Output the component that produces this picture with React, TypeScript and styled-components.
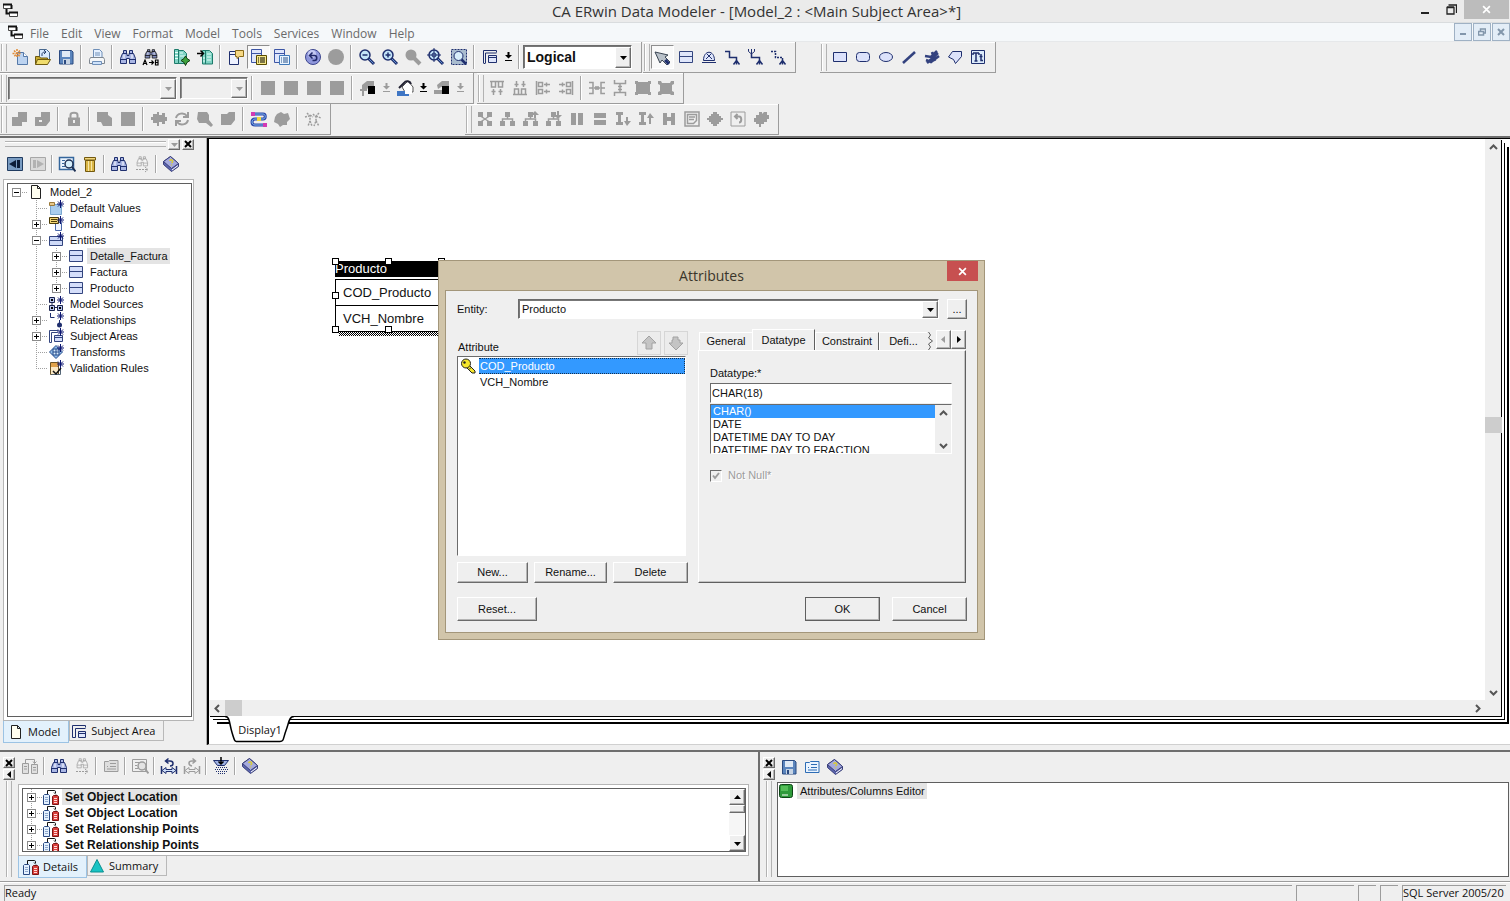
import React, { ReactNode } from 'react';
import styled, { createGlobalStyle, css } from 'styled-components';

const face = '#efefef';
const shade = '#9c9c9c';
const dark = '#5f5f5f';
const navy = '#1f2f6e';
const uiFont = '"Open Sans", "Noto Sans", sans-serif';
const smallFont = '"Liberation Sans", Arial, sans-serif';

const GlobalStyle = createGlobalStyle`
  * { box-sizing: border-box; }
  body { margin: 0; background: ${face}; overflow: hidden; }
  button, select, input { font: inherit; color: inherit; margin: 0; padding: 0; border-radius: 0; }
  ul { list-style: none; margin: 0; padding: 0; }
`;

/* ---------- icons ---------- */

const Binoculars = ({ fill, line }: { fill: string; line: string }) => (
  <g fill={fill} stroke={line}>
    <path d="M4.500 2.500h3v3h-3zM10.500 2.500h3v3h-3z" />
    <path d="M3.500 5.500h4.500v2h2v-2h4.500l2 5v5h-6v-5h-3v5h-6v-5z" />
    <path d="M1.500 11.500h6M10.500 11.500h6" fill="none" />
    <path d="M5 6.500v4M13 6.500v4" fill="none" stroke="#fff" />
  </g>
);

const Lens = ({ children }: { children?: ReactNode }) => (
  <g>
    <path d="M10.500 10.500l5.500 5.500" stroke={navy} strokeWidth="3" />
    <path d="M11 11l4.500 4.500" stroke="#5f8fd0" strokeWidth="1" />
    <circle cx="7" cy="7" r="5" fill="#c3e4f8" stroke={navy} strokeWidth="1.500" />
    {children}
  </g>
);

const Book = () => (
  <g stroke="#3a3f78">
    <path d="M1.500 6.500l7-5 8 7v3l-7 5-8-7z" fill="#5c66b0" />
    <path d="M1.500 6.500l7-5 8 7-7 5z" fill="#a5aade" />
    <path d="M10 15l6-4.500" stroke="#fff" />
    <path d="M7.500 6c1-2 4-1 3 1l-1 1M9.500 9.500v1" stroke="#d8cc3a" fill="none" strokeWidth="1.500" />
  </g>
);

const Disk = () => (
  <g>
    <path d="M2.500 2.500h12l1.500 1.500v12h-13.500z" fill="#5b85bd" stroke="#2b4a80" />
    <path d="M5 3h8v6h-8z" fill="#dfe9f5" />
    <path d="M6 11h7v5h-7z" fill="#c7d4e4" />
    <path d="M7 12h2v4h-2z" fill="#2b4a80" />
  </g>
);

const PasteCard = () => (
  <g>
    <path d="M2.500 4.500h4l1-1h8.500v11h-13.500z" fill="#eaf4ff" stroke="#2c6cb5" />
    <path d="M8 6.500h6M5 9.500h1M8 9.500h6M5 12h9" stroke="#2c6cb5" />
  </g>
);

const LinkDown = ({ dashed, fork }: { dashed?: boolean; fork?: boolean }) => (
  <g fill="none" stroke={navy} strokeWidth="1">
    <path d={fork ? 'M5.500 6v3.500h8v3' : 'M2 3.500h4.500v6h7v3'} strokeDasharray={dashed ? '2 1' : undefined} strokeWidth="1.500" />
    {fork && <path d="M2.500 1v2.500l3 2.500 3-2.500v-2.500M5.500 1v5" />}
    <path d="M10.500 16.500l3-4 3 4M13.500 12v4.500" strokeWidth="1.500" />
  </g>
);

const GreyTree = ({ children }: { children?: ReactNode }) => (
  <g fill={shade}>
    <path d="M6 2h5v5h-5zM1 11h5v5h-5zM11 11h5v5h-5z" />
    <path d="M8.500 7v2M3.500 12v-3h10v3" stroke={shade} fill="none" strokeWidth="1.500" />
    {children}
  </g>
);

const glyphs: Record<string, ReactNode> = {
  new: (
    <g>
      <path d="M6.500 4.500h6l4 4v8h-10z" fill="#bcd3f0" stroke="#5579a8" />
      <path d="M12.500 4.500v4h4" fill="#fff" stroke="#5579a8" />
      <path d="M6 1v9M1.500 5.500h9M3 2.500l6 6M9 2.500l-6 6" stroke="#e08a35" strokeDasharray="2 1" strokeWidth="1.500" />
    </g>
  ),
  open: (
    <g>
      <path d="M5.500 1.500h7l3 3v8h-10z" fill="#d9eaff" stroke="#48688f" />
      <path d="M8 8v-2c0-1 1-2 3-2M10 2l2 2-2 2" stroke="#26406e" fill="none" />
      <path d="M1.500 8.500h4l1 1.500h7v6h-12z" fill="#c8aa2e" stroke="#6e5a10" />
      <path d="M3.500 11.500h13l-3 5h-12z" fill="#f0dc6c" stroke="#6e5a10" />
    </g>
  ),
  save: <Disk />,
  print: (
    <g stroke="#6f8fb8">
      <path d="M5.500 9v-7.500h6l2.500 2.500v5" fill="#e6f1ff" />
      <path d="M2.500 9.500h13l1 2v4h-15v-4z" fill="#f4f6f8" stroke="#7f8790" />
      <path d="M4.500 13.500h9v3h-9z" fill="#cfe3fb" />
      <path d="M7 5h5M7 7h5" />
    </g>
  ),
  find: <Binoculars fill="#a9b6e4" line={navy} />,
  replace: (
    <g>
      <g transform="translate(2 0) scale(.78 .65)">
        <Binoculars fill="#7f8ab8" line="#000" />
      </g>
      <path d="M1 17l2-5 2 5M1.500 15.500h3M7 14.500h4M9.500 12.500l2 2-2 2" stroke="#000" fill="none" strokeWidth="1.200" />
      <path d="M13.500 12v5h2.500v-5zM13.500 14.500h2.500" stroke="#000" fill="none" strokeWidth="1.200" />
    </g>
  ),
  exportLib: (
    <g>
      <path d="M1.500 1.500h4v14h-4zM5.500 2.500h5l3 3v10h-8z" fill="#7fd3c4" stroke="#1d7b6b" />
      <path d="M2 4.500h3M2 7.500h3M2 10.500h3M7 5h3M7 8h5" stroke="#e8fffa" />
      <path d="M12.500 8l1.500 2.500 3 2-3 2-1.500 3-1.500-3-3-2 3-2z" fill="#3ea33e" stroke="#123d12" />
    </g>
  ),
  importLib: (
    <g>
      <path d="M6.500 2.500h7l3 3v10.500h-10z" fill="#7fd3c4" stroke="#1d7b6b" />
      <path d="M9.500 3v13" stroke="#1d7b6b" />
      <path d="M11 6h4M11 9h4M11 12h4M7 10h2M7 13h2" stroke="#e8fffa" />
      <path d="M1 5.500h6M4.500 2.500l3 3-3 3" stroke="#000" strokeWidth="1.500" fill="none" />
    </g>
  ),
  callout: (
    <g>
      <path d="M2.500 3.500h9v13h-9z" fill="#eef2ff" stroke={navy} />
      <path d="M2.500 6.500h9" stroke={navy} />
      <path d="M8.500 2.500h8v6h-4l-2.500 2v-2h-1.500z" fill="#f6d884" stroke="#8a6a18" />
    </g>
  ),
  listYellow: (
    <g>
      <path d="M1.500 1.500h10v13h-10z" fill="#dfe6fb" stroke="#3c55a5" />
      <path d="M1.500 5.500h10" stroke="#3c55a5" />
      <path d="M6.500 7.500h10v9h-10z" fill="#f6e88a" stroke="#5a4c00" />
      <path d="M8 10h1M10 10h5M8 12h1M10 12h5M8 14h1M10 14h5" stroke="#000" />
    </g>
  ),
  listBlue: (
    <g>
      <path d="M1.500 1.500h10v13h-10z" fill="#dfe6fb" stroke="#3c55a5" />
      <path d="M1.500 5.500h10" stroke="#3c55a5" />
      <path d="M6.500 7.500h10v9h-10z" fill="#eaf5ff" stroke="#3f78b8" />
      <path d="M8 10h1M10 10h5M8 12h1M10 12h5M8 14h1M10 14h5" stroke="#26508a" />
    </g>
  ),
  undo: (
    <g>
      <circle cx="9" cy="9" r="7.500" fill="#8f97dc" stroke="#3d468e" />
      <circle cx="8" cy="6" r="4" fill="#c4c9f3" />
      <path d="M6 7.500h4.500c3 0 3 5 0 5h-2M8.500 4.500l-3 3 3 3" stroke="#20286a" strokeWidth="1.500" fill="none" />
    </g>
  ),
  redo: <circle cx="9" cy="9" r="8" fill={shade} />,
  zoomOut: <Lens><path d="M4.500 7h5" stroke={navy} strokeWidth="1.500" /></Lens>,
  zoomIn: <Lens><path d="M4.500 7h5M7 4.500v5" stroke={navy} strokeWidth="1.500" /></Lens>,
  zoomOff: <g><circle cx="7" cy="7" r="5.500" fill={shade} /><path d="M10 10l6 6" stroke={shade} strokeWidth="4" /></g>,
  zoomTarget: <Lens><path d="M7 0v14M0 7h14" stroke={navy} /><circle cx="7" cy="7" r="2" fill="none" stroke={navy} /></Lens>,
  zoomArea: (
    <g>
      <path d="M1.500 1.500h15v15h-15z" fill="#a9bccf" stroke={navy} strokeDasharray="2 1" />
      <path d="M11 11l5 5" stroke={navy} strokeWidth="2.500" />
      <circle cx="8.500" cy="8" r="4.500" fill="#d8eefb" stroke={navy} />
    </g>
  ),
  windows: (
    <g fill="none" stroke={navy}>
      <path d="M2.500 15v-12.500h13M4.500 15v-10h11" />
      <path d="M2.500 15.500h2M15.500 2.500v2" />
      <path d="M7.500 7.500h8v7h-8z" fill="#dfe6fb" />
      <path d="M7.500 9.500h8" />
    </g>
  ),
  pointer: (
    <g>
      <path d="M1 4l13 3-3 2 5 5-3 3-5-5-2 3z" fill="#b9c1c9" stroke="#3b4653" />
      <path d="M12.500 11l3.500 4-2 2-4-4z" fill={navy} />
    </g>
  ),
  entity: (
    <g>
      <path d="M2.500 3.500h13v11h-13z" fill="#dfe6fb" stroke="#33457f" />
      <path d="M3 8.500h12" stroke="#33457f" />
    </g>
  ),
  subtype: (
    <g fill="none" stroke={navy}>
      <path d="M3.500 12.500c0-11 11-11 11 0zM2 14.500h14" fill="#dfe6fb" />
      <path d="M6 11l5-5M12 11l-5-5" />
    </g>
  ),
  linkSolid: <LinkDown />,
  linkFork: <LinkDown fork />,
  linkDash: <LinkDown dashed />,
  rect: <path d="M2.500 4.500h13v9h-13z" fill="#dce2fb" stroke={navy} />,
  roundRect: <rect x="2.500" y="4.500" width="13" height="9" rx="3" fill="#dce2fb" stroke={navy} />,
  ellipse: <ellipse cx="9" cy="9" rx="6.500" ry="4.500" fill="#dce2fb" stroke={navy} />,
  line: <path d="M3 15l12-11" stroke="#33427f" strokeWidth="2.500" />,
  polyline: <path d="M2 8l6 1 6-6M4 15l11-10M3 12l5 2 8-6M9 4l3 9" stroke="#33427f" strokeWidth="2.500" fill="none" />,
  polygon: <path d="M6.500 3.500h9v5l-6 7-2-4-5-2.500z" fill="#dce2fb" stroke={navy} />,
  textBox: (
    <g fill="none" stroke={navy}>
      <path d="M2.500 2.500h13v13h-13z" fill="#dcebfb" />
      <path d="M4 5h6M7 5v8M5.500 13h3M4 5v2M10 5v2M12 6v6.500h2M10.500 8.500h3" strokeWidth="1.500" />
    </g>
  ),
  square: <path d="M2 2h14v14h-14z" fill={shade} />,
  textColor: (
    <g fill={shade}>
      <path d="M3 6l5-4h7v6h-5l-2 2h-5z" />
      <path d="M9 7h7v8h-7z" fill="#000" />
      <path d="M1 10h7v2h-3v5h-2v-5h-2z" />
    </g>
  ),
  fillColor: (
    <g>
      <path d="M6 8l6-6 5 6v5h-8z" fill="#fff" stroke="#555" />
      <path d="M3 9l5-5c2-3 6-2 7 1" stroke="#223" strokeWidth="2" fill="none" />
      <path d="M1 12h9l3 1v4h-12z" fill="#3f76c4" />
      <path d="M9 9h7v6h-7z" fill="#fff" />
    </g>
  ),
  lineColor: (
    <g fill={shade}>
      <path d="M4 6l5-4h7v6h-8l-3 2z" />
      <path d="M9 7h7v8h-7z" fill="#000" />
      <path d="M1 11h8v4h-8z" />
    </g>
  ),
  alignTop: <path d="M2 2.500h14M3.500 3v5h4v-5M10.500 3v5h4v-5M5.500 16v-6M3.500 12.500h4M12.500 16v-6M10.500 12.500h4" stroke={shade} fill="none" strokeWidth="1.500" />,
  alignBottom: <path d="M2 15.500h14M3.500 15v-5h4v5M10.500 15v-5h4v5M5.500 2v6M3.500 5.500h4M12.500 2v6M10.500 5.500h4" stroke={shade} fill="none" strokeWidth="1.500" />,
  alignLeft: <path d="M2.500 2v14M4.500 3.500h4v4h-4zM4.500 10.500h4v4h-4zM10 5.500h6M10 12.500h6M12.500 3.500v4M12.500 10.500v4" stroke={shade} fill="none" strokeWidth="1.500" />,
  alignRight: <path d="M15.500 2v14M9.500 3.500h4v4h-4zM9.500 10.500h4v4h-4zM2 5.500h6M2 12.500h6M5.500 3.500v4M5.500 10.500v4" stroke={shade} fill="none" strokeWidth="1.500" />,
  spreadH: <path d="M1 3.500h4v11h-4M1 9h4M17 3.500h-4v11h4M13 9h4M6 9h6M8 7v4M10 7v4" stroke={shade} fill="none" strokeWidth="1.500" />,
  spreadV: <path d="M3.500 1v3.500h11v-3.500M3.500 17v-3.500h11v3.500M9 5v8M7 7.500h4M7 10.500h4" stroke={shade} fill="none" strokeWidth="1.500" />,
  group: <path d="M1 2h3v1h10v-1h3v3h-1v8h1v3h-3v-1h-10v1h-3v-3h1v-8h-1z" fill={shade} />,
  ungroup: <path d="M1 2h3l1 2h8l1-2h3v3l-2 1v6l2 1v3h-3l-1-1h-8l-1 1h-3v-3l2-1v-6l-2-1z" fill={shade} />,
  blockA: <path d="M7 2h9v10h-5v4h-10v-9h6z" fill={shade} />,
  blockB: <path d="M7 2h9v9l-4 5h-11v-9h6zM5 12h3v-2h-3z" fill={shade} fillRule="evenodd" />,
  lock: <g><path d="M3 7.500h12v8.500h-12z" fill={shade} /><path d="M5.500 8v-3c0-3 7-3 7 0v3" fill="none" stroke={shade} strokeWidth="2" /><path d="M8 10h2v3h-2z" fill={face} /></g>,
  copyShapes: <path d="M1 2h11v3l4 3v8h-9l-2-4h-4z" fill={shade} />,
  mergeH: <path d="M1 7h2v-3h4v-2h2v3h3v-2h3v4h2v4h-2v3h-3v-2h-3v4h-2v-3h-4v-3h-2z" fill={shade} />,
  refresh: <path d="M3 8c1-5 8-6 11-2M15 10c-1 5-8 6-11 2M15 2v5h-5M3 16v-5h5" stroke={shade} strokeWidth="2" fill="none" />,
  find2: <path d="M2 2h9l2 3v5l4 5-2 2-5-4h-7l-2-4z" fill={shade} />,
  tagShape: <path d="M2 4h6l2-2h6v8l-4 5h-10z" fill={shade} />,
  snake: (
    <g fill="none">
      <path d="M4 4h9c3 0 3 5 0 5h-8c-4 0-4 6 0 6h9" stroke="#2b45a8" strokeWidth="3" />
      <path d="M4 4h9c3 0 3 5 0 5h-8c-4 0-4 6 0 6h9" stroke="#7fb8ee" />
      <path d="M1 2h4v4h-4zM13 13h4v4h-4z" fill="#d23ab4" />
      <path d="M7 7h4v4h-4z" fill="#f0d93f" />
    </g>
  ),
  cloud: <path d="M4 4l4-2 3 2 4-1 2 6-3 3v3h-4l-3 2-2-3-4-2 1-5z" fill={shade} />,
  people: (
    <g fill="none" stroke={shade} strokeDasharray="2 1">
      <path d="M3 3l3 3v5l-2 5M6 11l2 5M9 4l3 3v4l-2 5M12 11l3 5M1 7l4-1M12 6l5 2M15 3l-3 3M6 5l3 2" strokeWidth="1.500" />
    </g>
  ),
  layoutX: <g><path d="M2 2h5v5h-5zM11 2h5v5h-5zM2 11h5v5h-5zM11 11h5v5h-5z" fill={shade} /><path d="M4.500 6l9 6M13.500 6l-9 6" stroke={shade} strokeWidth="1.500" /></g>,
  layoutTree: <GreyTree />,
  layoutUp: <GreyTree><path d="M12 8h2v-3h3l-4-4-4 4h3z" /></GreyTree>,
  layoutDown: <GreyTree><path d="M12 1h2v4h3l-4 4-4-4h3z" /></GreyTree>,
  columns: <path d="M3 3h5v12h-5zM10 3h5v12h-5z" fill={shade} />,
  rows: <path d="M3 3h12v5h-12zM3 10h12v5h-12z" fill={shade} />,
  growDown: <path d="M2 2h7v3h-2v7h2v3h-7v-3h2v-7h-2zM12 7h2v4h3l-4 5-3-5h2z" fill={shade} />,
  growUp: <path d="M2 2h7v3h-2v7h2v3h-7v-3h2v-7h-2zM12 14h2v-6h3l-4-5-3 5h2z" fill={shade} />,
  bridge: <path d="M3 3h4v4h4v-4h4v12h-4v-4h-4v4h-4z" fill={shade} />,
  note: <g fill="none" stroke={shade} strokeWidth="1.500"><path d="M2 2h14v14h-14zM4.500 4.500h9v6l-3 3h-6z" /><path d="M6 7h6M6 9.500h5" /></g>,
  diamond: <path d="M7 2h4v2h2v2h2v2h2v2h-2v2h-2v2h-2v2h-4v-2h-2v-2h-2v-2h-2v-2h2v-2h2v-2h2z" fill={shade} />,
  back: <g fill="none" stroke={shade}><path d="M2 2h14v14h-14z" /><path d="M7 6.500h3c3 0 3 6 0 6M8.500 4l-2.500 2.500 2.500 2.500" strokeWidth="2" /></g>,
  burst: <path d="M7 2h3v2l2-2h3v3h2v4h-2v3h-3v2h-3v3h-2v-3h-3v-2h-2v-4h2v-3h3z" fill={shade} />,
  prev: (
    <g>
      <path d="M1.500 2.500h15v13h-15z" fill="#7a9cc2" stroke="#203b60" />
      <path d="M10 5v8l-7-4zM11 5h3v8h-3z" fill="#0c1d38" />
    </g>
  ),
  next: (
    <g>
      <path d="M1.500 2.500h15v13h-15z" fill="#dadada" stroke="#a7a7a7" />
      <path d="M8 5v8l7-4zM4 5h3v8h-3z" fill="#b2b2b2" />
    </g>
  ),
  preview: (
    <g>
      <path d="M1.500 2.500h14v12h-14z" fill="#eaf4ff" stroke="#34669c" strokeWidth="1.500" />
      <path d="M4 5.500h3M4 8.500h2M4 11.500h3" stroke="#34669c" />
      <circle cx="11" cy="9" r="4" fill="#d7effb" stroke="#1d2f52" strokeWidth="1.500" />
      <path d="M14 12l3.500 4.500" stroke="#1d2f52" strokeWidth="2" />
    </g>
  ),
  trash: (
    <g>
      <path d="M4.500 5.500h9v11h-9z" fill="#d9b546" stroke="#73590e" />
      <path d="M3.500 2.500h11v2.500h-11z" fill="#f1d67c" stroke="#73590e" />
      <path d="M7.500 6v10M10.500 6v10" stroke="#f7e6a5" />
    </g>
  ),
  findNext: (
    <g>
      <g transform="translate(3 0) scale(.7)"><Binoculars fill="none" line={shade} /></g>
      <path d="M3 14.500h12M12 12l3 2.500-3 2.500" stroke={shade} strokeDasharray="2 1" fill="none" />
    </g>
  ),
  book: <Book />,
  logsOff: (
    <g fill="none" stroke={shade}>
      <path d="M1.500 6.500h6v10h-6zM10.500 7.500h6v9h-6z" fill="#e0e0e0" />
      <path d="M4.500 6v-3.500h9v4M12 4.500l1.500 2 2-2M3 9.500h3M3 12h3M12 10.500h3M12 13h3" />
    </g>
  ),
  cardOff: <g fill="none" stroke={shade}><path d="M2.500 4.500h4l1-1h8.500v11h-13.500z" fill="#dedede" /><path d="M8 6.500h6M5 9.500h1M8 9.500h6M5 12h9" /></g>,
  previewOff: <g fill="none" stroke={shade}><path d="M1.500 2.500h14v12h-14zM4 5.500h8M4 8.500h2M4 11.500h3" /><circle cx="11" cy="9" r="4" fill="#e3e3e3" strokeWidth="1.500" /><path d="M14 12l3.500 4.500" strokeWidth="2" /></g>,
  undoSpan: <g fill="none" stroke={navy}><path d="M1.500 9v8M16.500 9v8" strokeWidth="1.500" /><path d="M6 10.500l-4 3 4 3v-2h6v2l4-3-4-3v2h-6z" fill="#cfe0fa" /><path d="M6 4h4c4 0 4 5 0 5M8.500 1.500l-3 2.500 3 2.500" strokeWidth="1.500" /></g>,
  redoSpan: <g fill="none" stroke={shade}><path d="M1.500 9v8M16.500 9v8" strokeWidth="1.500" /><path d="M6 10.500l-4 3 4 3v-2h6v2l4-3-4-3v2h-6z" /><path d="M12 4h-3c-4 0-4 4 0 5M9.500 1.500l3 2.500-3 2.500" strokeWidth="1.500" /></g>,
  drop: (
    <g>
      <path d="M1.500 3.500h15l-4 5h-7z" fill="#9fb2e4" stroke={navy} />
      <path d="M9 0v7M6.500 4.500l2.500 2.500 2.500-2.500" stroke="#000" fill="none" strokeWidth="1.500" />
      <path d="M4 10.500h11M3 12.500h13M4 14.500h11M6 16.500h7" stroke={navy} strokeDasharray="1 1" />
    </g>
  ),
  card: <PasteCard />,
};

const Star = () => <path d="M12.500 0v8M9 4h7M10 1.500l5 5M15 1.500l-5 5" stroke="#0a1470" />;

const treeGlyphs: Record<string, ReactNode> = {
  page: <path d="M3.500 1.500h6l3 3v10h-9zM9.500 1.500v3h3" fill="#fffef0" stroke="#222" />,
  defaults: <g><path d="M2.500 4.500h11v10h-11z" fill="#a9cdee" stroke="#7aa7d0" /><path d="M1.500 2.500h5v3h-5z" fill="#e7c98c" stroke="#9b7a3a" /><Star /></g>,
  domains: <g><path d="M7.500 6.500h6v8h-6z" fill="#eef3ff" stroke="#4b68a8" /><path d="M1.500 1.500h9v6h-9z" fill="#f3d676" stroke="#4d3c08" /><path d="M3 3.500h6M3 5.500h6" stroke="#4d3c08" /><Star /></g>,
  entities: <g><path d="M1.500 4.500h13v9h-13z" fill="#cfdaf7" stroke="#33457f" /><path d="M2 8.500h12" stroke="#33457f" /><Star /></g>,
  entity: <g><path d="M1.500 2.500h13v11h-13z" fill="#d5defa" stroke="#33457f" /><path d="M2 7.500h12" stroke="#33457f" /></g>,
  sources: <g><path d="M1.500 1.500h5v5h-5zM1.500 9.500h5v5h-5zM9.500 9.500h5v5h-5z" fill="#b9c6ec" stroke="#1b2450" /><path d="M7 11.500h2M4 6v4" stroke="#1b2450" /><path d="M3 3h2v2h-2zM3 11h2v2h-2zM11 11h2v2h-2z" fill="#000" /><Star /></g>,
  relations: <g><path d="M2.500 1v4.500h4M11.500 8v4" stroke={navy} fill="none" /><circle cx="11.500" cy="13" r="2.500" fill={navy} /><Star /></g>,
  areas: <g><path d="M1.500 14.500v-12h9M1.500 14.500h2v-10h6" fill="none" stroke="#33457f" /><path d="M6.500 7.500h8v6h-8z" fill="#d5defa" stroke="#33457f" /><path d="M7 9.500h7" stroke="#33457f" /><Star /></g>,
  transforms: <g><path d="M8 1.500l6.500 6.500-6.500 6.500-6.500-6.500z" fill="#8fbbe8" stroke="#234a8a" /><path d="M5 5h6v6h-6zM5 8h6M8 5v6" stroke="#234a8a" fill="#d9ecfb" /><Star /></g>,
  rules: <g><path d="M2.500 2.500h8v12h-8z" fill="#fbe9c5" stroke="#6b5426" /><path d="M3 3h7v4h-7z" fill="#e0a24a" /><path d="M12.500 8v6.500h-9" stroke="#567" fill="none" /><path d="M5 11l3 3 5-6" stroke="#111" strokeWidth="1.500" fill="none" /><Star /></g>,
  log: (
    <g>
      <path d="M4.500 5v-3.500h7c1 0 1 1 1 2.500M11 3.500l2 2" stroke="#111" fill="none" />
      <path d="M.5 6.500l1-1h4l1 1v9h-6z" fill="#e4f1ff" stroke="#2a4a84" />
      <path d="M9.500 7.500l1-1h4l1 1v8h-6z" fill="#d9403c" stroke="#7c1313" />
      <path d="M2 8.500h3M2 10.500h3M2 12.500h3" stroke="#8fa8cc" />
      <path d="M11 9.500h3M11 11.500h3M11 13.500h3" stroke="#ffd9d9" />
    </g>
  ),
  summary: <path d="M8 1.500l6.500 12.500h-13z" fill="#19c3c3" stroke="#0b8f8f" />,
  windows: <g fill="none" stroke={navy}><path d="M1.500 14.500v-12h13v2M1.500 14.500h3v-9h10" /><path d="M7.500 8.500h7v6h-7z" fill="#dfe6fb" /><path d="M7.500 10.500h7" /></g>,
  advisor: <g><rect x="1.500" y="1.500" width="13" height="13" rx="2" fill="#2e9a3a" stroke="#0d4416" /><path d="M3 3h7v5h-7z" fill="#54bd58" /><path d="M4 12h6" stroke="#fff" /></g>,
};

const Glyph = ({ name }: { name: string }) => (
  <svg width="18" height="18" viewBox="0 0 18 18" aria-hidden="true">{glyphs[name]}</svg>
);
const TreeGlyph = ({ name }: { name: string }) => (
  <svg width="16" height="16" viewBox="0 0 16 16" aria-hidden="true">{treeGlyphs[name]}</svg>
);
const AppMark = () => (
  <svg width="16" height="16" viewBox="0 0 16 16" aria-hidden="true">
    <path d="M.5 2.500h8v4h-8zM6.500 10.500h8v4h-8z" fill="#fff" stroke="#444" />
    <path d="M0 2.500h9M6 10.500h9M3.500 7v4.500h3M8.500 3v4" stroke="#111" strokeWidth="2" fill="none" />
  </svg>
);
const Caret = ({ dir, color = '#000' }: { dir: 'up' | 'down' | 'left' | 'right'; color?: string }) => {
  const d = { up: 'M1 6h7l-3.500-4z', down: 'M1 3h7l-3.500 4z', left: 'M6 1v7l-4-3.500z', right: 'M3 1v7l4-3.500z' }[dir];
  return <svg width="9" height="9" viewBox="0 0 9 9" aria-hidden="true"><path d={d} fill={color} /></svg>;
};
const Chevron = ({ dir }: { dir: 'up' | 'down' | 'left' | 'right' }) => {
  const d = { up: 'M1 6l3.500-3.500 3.500 3.500', down: 'M1 3l3.500 3.500 3.500-3.500', left: 'M6 1l-3.500 3.500 3.500 3.500', right: 'M3 1l3.500 3.500-3.500 3.500' }[dir];
  return <svg width="9" height="9" viewBox="0 0 9 9" aria-hidden="true"><path d={d} fill="none" stroke="#555" strokeWidth="2" /></svg>;
};
const Cross = ({ size = 8, color = '#000', weight = 2 }: { size?: number; color?: string; weight?: number }) => (
  <svg width={size} height={size} viewBox="0 0 8 8" aria-hidden="true"><path d="M1 1l6 6M7 1l-6 6" stroke={color} strokeWidth={weight} /></svg>
);

/* ---------- shared pieces ---------- */

const raised = css`
  border: 1px solid;
  border-color: #fff #6b6b6b #6b6b6b #fff;
  box-shadow: inset -1px -1px 0 #b4b4b4;
`;
const sunken = css`
  border: 1px solid;
  border-color: #6b6b6b #fff #fff #6b6b6b;
`;

const Shell = styled.div`
  display: flex;
  flex-direction: column;
  height: 100vh;
  background: ${face};
  font-family: ${smallFont};
  font-size: 11px;
  line-height: 13px;
  color: #111;
  cursor: default;
`;

const TitleBar = styled.header`
  display: grid;
  grid-template-columns: 1fr auto 1fr;
  flex: none;
  height: 23px;
  padding-left: 3px;
  background: #ebebeb;
  border-bottom: 1px solid #d9dcde;
`;
const TitleMark = styled.span`padding-top: 2px;`;
const AppTitle = styled.h1`
  margin: 0;
  font: 400 15px/23px ${uiFont};
  color: #333;
`;
const WindowButtons = styled.div`
  display: flex;
  justify-content: flex-end;
`;
const CaptionButton = styled.button<{ $close?: boolean }>`
  display: flex;
  align-items: center;
  justify-content: center;
  width: ${p => (p.$close ? 45 : 26)}px;
  height: 19px;
  margin-right: ${p => (p.$close ? 1 : 0)}px;
  border: 0;
  background: ${p => (p.$close ? '#bcbcbc' : 'none')};
`;

const MenuBar = styled.nav`
  display: flex;
  flex: none;
  align-items: center;
  height: 19px;
  padding-left: 8px;
  background: #f5f8fa;
  border-bottom: 1px solid #e6e8ea;
  font: 12px/18px ${uiFont};
  color: #6a6a6a;
`;
const MenuItem = styled.button`
  height: 19px;
  border: 0;
  background: none;
  padding: 2px 6px 0;
`;
const MdiButtons = styled.div`
  display: flex;
  gap: 1px;
  margin-left: auto;
`;
const MdiButton = styled.button`
  display: flex;
  align-items: center;
  justify-content: center;
  width: 18px;
  height: 18px;
  border: 1px solid #9fb1c4;
  background: #e3edf7;
`;

const Toolbars = styled.div`
  flex: none;
  padding-bottom: 1px;
  border-bottom: 2px solid #6e6e6e;
`;
const ToolbarRow = styled.div`display: flex;`;
const Band = styled.div<{ $gap?: number }>`
  display: flex;
  align-items: center;
  height: 31px;
  margin-left: ${p => p.$gap ?? 0}px;
  padding-right: 6px;
  border-right: 1px solid ${shade};
  border-bottom: 1px solid ${shade};
  box-shadow: inset 0 1px 0 #fff;
`;
const Grip = styled.span<{ $down?: boolean }>`
  flex: none;
  width: 6px;
  height: ${p => (p.$down ? 'auto' : '27px')};
  flex-grow: ${p => (p.$down ? 1 : 0)};
  margin: 0 1px;
  border: solid #b2b2b2;
  border-width: 0 1px;
  box-shadow: inset 1px 0 0 #fff, inset -1px 0 0 ${face};
`;
const Separator = styled.span<{ $tight?: boolean }>`
  flex: none;
  width: 1px;
  height: ${p => (p.$tight ? 18 : 24)}px;
  margin: 0 ${p => (p.$tight ? '3px 0 2px' : '4px 0 3px')};
  background: #a6a6a6;
  box-shadow: 1px 0 0 #fff;
`;
const ToolButton = styled.button<{ $pressed?: boolean }>`
  display: flex;
  flex: none;
  align-items: center;
  justify-content: center;
  width: 23px;
  height: 24px;
  background: ${p => (p.$pressed ? '#f9f9f9' : 'none')};
  border: 1px solid transparent;
  border-color: ${p => (p.$pressed ? '#8e8e8e #fff #fff #8e8e8e' : 'transparent')};
`;
const DropButton = styled.button`
  display: flex;
  flex: none;
  align-items: center;
  justify-content: center;
  width: 14px;
  height: 24px;
  border: 0;
  background: none;
`;

const DropMark = ({ color }: { color: string }) => (
  <svg width="9" height="10" viewBox="0 0 9 10" aria-hidden="true">
    <path d="M3.500 0h2v3h2.500l-3.500 3.500-3.500-3.500h2.500zM1 8h7v1h-7z" fill={color} />
  </svg>
);

/* '|' makes a separator, '>' and '<' an active or a greyed drop arrow, a leading '*' a pressed button */
const Tools = ({ items, tight }: { items: string; tight?: boolean }) => (
  <>
    {items.split(' ').map((it, i) => {
      if (it === '|') return <Separator key={i} $tight={tight} />;
      if (it === '>' || it === '<') {
        return <DropButton key={i} aria-label="More"><DropMark color={it === '>' ? '#000' : shade} /></DropButton>;
      }
      const name = it.replace('*', '');
      return (
        <ToolButton key={i} aria-label={name} $pressed={it.startsWith('*')}>
          <Glyph name={name} />
        </ToolButton>
      );
    })}
  </>
);

const ComboBox = styled.div<{ $w?: number; $h: number; $off?: boolean }>`
  display: flex;
  position: relative;
  flex: ${p => (p.$w ? 'none' : '1')};
  width: ${p => (p.$w ? `${p.$w}px` : 'auto')};
  height: ${p => p.$h}px;
  background: ${p => (p.$off ? face : '#fff')};
  ${sunken}
  box-shadow: inset 1px 1px 0 ${p => (p.$off ? '#8c8c8c' : '#777')};
`;
const ComboSelect = styled.select<{ $big?: boolean }>`
  flex: 1;
  width: 100%;
  padding-left: 3px;
  border: 0;
  background: none;
  appearance: none;
  outline: 0;
  font-weight: ${p => (p.$big ? 700 : 400)};
  font-size: ${p => (p.$big ? 14 : 11)}px;
  line-height: ${p => (p.$big ? 18 : 13)}px;
`;
const ComboArrow = styled.span`
  display: flex;
  position: absolute;
  top: 1px;
  right: 0;
  bottom: 0;
  width: 16px;
  align-items: center;
  justify-content: center;
  background: ${face};
  pointer-events: none;
  ${raised}
`;
const Combo = ({ label, value, w, h, off, big, id }: { label: string; value?: string; w?: number; h: number; off?: boolean; big?: boolean; id?: string }) => (
  <ComboBox $w={w} $h={h} $off={off}>
    <ComboSelect id={id} aria-label={label} disabled={off} $big={big}>
      <option>{value}</option>
    </ComboSelect>
    <ComboArrow><Caret dir="down" color={off ? shade : '#000'} /></ComboArrow>
  </ComboBox>
);
const ComboGap = styled.span`flex: none; width: 3px;`;

/* ---------- tree ---------- */

const TreeRow = styled.li<{ $bold?: boolean }>`
  display: flex;
  align-items: center;
  height: 16px;
  font-weight: ${p => (p.$bold ? 700 : 400)};
  font-size: ${p => (p.$bold ? 12 : 11)}px;
  white-space: nowrap;
`;
const dots = (to: string) => `repeating-linear-gradient(${to}, #a0a0a0 0 1px, transparent 1px 2px)`;
const Cell = styled.span<{ $line?: 'full' | 'half'; $stub?: boolean }>`
  display: flex;
  flex: none;
  align-items: center;
  width: 20px;
  height: 16px;
  padding-left: 4px;
  background-image: ${p => (p.$line ? dots('to bottom') : 'none')}, ${p => (p.$stub ? dots('to right') : 'none')};
  background-position: 8px 0, 8px 8px;
  background-size: 1px ${p => (p.$line === 'half' ? '8px' : '16px')}, 12px 1px;
  background-repeat: no-repeat;
`;
const Expander = styled.button`
  display: flex;
  width: 9px;
  height: 9px;
  border: 1px solid #8b8b8b;
  background: #fff;
`;
const ExpanderMark = ({ open }: { open?: boolean }) => (
  <Expander aria-label={open ? 'Collapse' : 'Expand'}>
    <svg width="7" height="7" viewBox="0 0 7 7"><path d={open ? 'M1 3.500h5' : 'M1 3.500h5M3.500 1v5'} stroke="#000" /></svg>
  </Expander>
);
const TreeLabel = styled.span<{ $sel?: boolean }>`
  margin-left: 3px;
  padding: 0 2px 0 3px;
  line-height: 16px;
  background: ${p => (p.$sel ? '#e4e4e4' : 'none')};
`;

type Node = { depth: number; icon: string; text: string; box?: 'plus' | 'minus'; last?: boolean; sel?: boolean };
const modelNodes: Node[] = [
  { depth: 0, icon: 'page', text: 'Model_2', box: 'minus' },
  { depth: 1, icon: 'defaults', text: 'Default Values' },
  { depth: 1, icon: 'domains', text: 'Domains', box: 'plus' },
  { depth: 1, icon: 'entities', text: 'Entities', box: 'minus' },
  { depth: 2, icon: 'entity', text: 'Detalle_Factura', box: 'plus', sel: true },
  { depth: 2, icon: 'entity', text: 'Factura', box: 'plus' },
  { depth: 2, icon: 'entity', text: 'Producto', box: 'plus', last: true },
  { depth: 1, icon: 'sources', text: 'Model Sources' },
  { depth: 1, icon: 'relations', text: 'Relationships', box: 'plus' },
  { depth: 1, icon: 'areas', text: 'Subject Areas', box: 'plus' },
  { depth: 1, icon: 'transforms', text: 'Transforms' },
  { depth: 1, icon: 'rules', text: 'Validation Rules', last: true },
];
const actions = ['Set Object Location', 'Set Object Location', 'Set Relationship Points', 'Set Relationship Points'];

/* ---------- docks ---------- */

const Workspace = styled.main`
  display: flex;
  flex: 1;
  min-height: 0;
`;
const LeftDock = styled.aside`
  display: flex;
  flex-direction: column;
  flex: none;
  width: 207px;
  padding: 0 12px 2px 3px;
  border-right: 1px solid #b0b0b0;
`;
const DockCaption = styled.div`
  display: flex;
  align-items: center;
  gap: 2px;
  height: 12px;
`;
const DockGrip = styled.span`
  flex: 1;
  height: 6px;
  margin-left: 2px;
  border: solid #b2b2b2;
  border-width: 1px 0;
  box-shadow: inset 0 1px 0 #fff;
`;
const TinyButton = styled.button`
  display: flex;
  align-items: center;
  justify-content: center;
  width: 12px;
  height: 11px;
  background: ${face};
  ${raised}
`;
const DockTools = styled.div<{ $h: number; $under: number }>`
  display: flex;
  flex: none;
  align-items: center;
  height: ${p => p.$h}px;
  padding-bottom: ${p => p.$under}px;
`;
const TreeFrame = styled.div`
  display: flex;
  flex: 1;
  min-height: 0;
  padding: 3px 1px 3px 3px;
  background: #fff;
  border: 1px solid #b5b5b5;
`;
const TreeBox = styled.ul`
  flex: 1;
  border: 1px solid ${dark};
  overflow: hidden;
`;
const DockTabs = styled.div`
  display: flex;
  flex: none;
  height: 22px;
  font: 11px/20px ${uiFont};
`;
const DockTab = styled.button<{ $on?: boolean }>`
  display: flex;
  align-items: center;
  gap: 4px;
  height: ${p => (p.$on ? 22 : 20)}px;
  padding: 0 8px 0 ${p => (p.$on ? 4 : 1)}px;
  border: 1px solid;
  border-top: 0;
  border-color: ${p => (p.$on ? '#9cc3e4' : '#b9b9b9')};
  background: ${p => (p.$on ? '#e3f1fc' : face)};
`;

/* ---------- canvas ---------- */

const CanvasArea = styled.section`
  display: flex;
  flex: 1;
  flex-direction: column;
  min-width: 0;
  background: #fff;
  border-left: 2px solid #000;
  border-top: 1px solid #000;
  border-bottom: 1px solid #d0d0d0;
`;
const Sheet = styled.div`
  display: grid;
  flex: 1;
  min-height: 0;
  margin-right: 9px;
  grid-template-columns: 1fr 16px;
  grid-template-rows: 1fr 16px;
  background: #fff;
  box-shadow: 1px 1px 0 #000, 3px 3px 0 #fff, 4px 4px 0 #000, 6px 6px 0 #fff, 8px 8px 0 #000;
`;
const Canvas = styled.div`
  position: relative;
  overflow: hidden;
`;
const ScrollBar = styled.div<{ $across?: boolean }>`
  display: flex;
  flex-direction: ${p => (p.$across ? 'row' : 'column')};
  align-items: stretch;
  background: ${face};
`;
const ScrollArrow = styled.button`
  display: flex;
  flex: none;
  align-items: center;
  justify-content: center;
  min-width: 16px;
  height: 16px;
  border: 0;
  background: none;
`;
const ScrollSpace = styled.span<{ $grow: number }>`flex: ${p => p.$grow} 1 0;`;
const ScrollThumb = styled.span`
  flex: none;
  min-width: 17px;
  min-height: 16px;
  background: #cdcdcd;
`;
const SheetCorner = styled.span`background: ${face};`;

const SheetTabs = styled.div`
  display: flex;
  flex: none;
  height: 28px;
  padding-left: 16px;
`;
const SheetTab = styled.button`
  display: grid;
  position: relative;
  width: 70px;
  height: 27px;
  border: 0;
  background: none;
  font: 11px/27px ${uiFont};
  & > * { grid-area: 1 / 1; }
`;

const EntityNode = styled.div`
  position: absolute;
  left: 126px;
  top: 122px;
  width: 108px;
  font-size: 13px;
  line-height: 16px;
`;
const EntityName = styled.div`
  height: 16px;
  background: #000;
  color: #fff;
`;
const EntityBox = styled.div`
  margin-top: 2px;
  border: 1px solid #000;
`;
const EntityColumn = styled.div`
  height: 25px;
  padding-left: 7px;
  line-height: 26px;
  & + & { height: 26px; border-top: 1px solid #000; line-height: 25px; }
`;
const EntityShadow = styled.div`
  height: 4px;
  margin-left: 4px;
  background: repeating-conic-gradient(#000 0 25%, #fff 0 50%) 0 0 / 2px 2px;
`;
const Handle = styled.i<{ $col: number; $row: number }>`
  position: absolute;
  left: ${p => p.$col * 53 - 3}px;
  top: ${p => p.$row * 34 - 3}px;
  width: 7px;
  height: 7px;
  border: 1px solid #000;
  background: #fff;
`;

/* ---------- dialog ---------- */

const Dialog = styled.div`
  position: absolute;
  left: 438px;
  top: 260px;
  display: flex;
  flex-direction: column;
  width: 547px;
  height: 380px;
  padding: 0 6px 6px;
  border: 1px solid #a3967a;
  background: #d1c5aa;
`;
const DialogTitle = styled.div`
  display: grid;
  grid-template-columns: 1fr auto 1fr;
  height: 29px;
`;
const DialogName = styled.h2`
  grid-column: 2;
  margin: 0;
  font: 400 14px/29px ${uiFont};
  color: #3a352b;
`;
const DialogClose = styled.button`
  display: flex;
  align-items: center;
  justify-content: center;
  justify-self: end;
  width: 31px;
  height: 20px;
  border: 0;
  background: #c75050;
`;
const DialogBody = styled.div`
  display: flex;
  flex: 1;
  flex-direction: column;
  padding: 8px 10px 10px 11px;
  border: 1px solid #a3967a;
  background: ${face};
`;
const EntityRow = styled.div`
  display: flex;
  gap: 8px;
  height: 20px;
`;
const EntityLabel = styled.label`
  width: 53px;
  line-height: 20px;
`;
const PushButton = styled.button<{ $w: number; $main?: boolean }>`
  width: ${p => p.$w}px;
  background: ${face};
  text-align: center;
  ${raised}
  outline: ${p => (p.$main ? `1px solid ${dark}` : '0')};
  outline-offset: -1px;
`;
const Columns = styled.div`
  display: flex;
  gap: 10px;
  height: 253px;
  margin-top: 11px;
`;
const AttributeColumn = styled.div`
  display: flex;
  flex-direction: column;
  width: 231px;
`;
const AttributeHead = styled.div`
  display: flex;
  align-items: flex-start;
  gap: 3px;
  height: 26px;
  padding-top: 1px;
`;
const AttributeLabel = styled.span`
  margin-right: auto;
  padding: 10px 0 0 1px;
`;
const MoveButton = styled.button`
  display: flex;
  align-items: center;
  justify-content: center;
  width: 24px;
  height: 24px;
  border: 1px solid #d6d6d6;
  background: #ececec;
`;
const AttributeList = styled.ul`
  flex: 1;
  && { padding: 1px 0 0 1px; margin-right: 2px; }
  background: #fff;
  ${sunken}
`;
const AttributeItem = styled.li`
  display: flex;
  height: 16px;
  align-items: center;
`;
const KeySlot = styled.span`width: 20px; height: 16px; padding-left: 1px;`;
const AttributeText = styled.span<{ $sel?: boolean }>`
  flex: 1;
  padding-left: 1px;
  line-height: 14px;
  border: 1px dotted ${p => (p.$sel ? '#14304e' : 'transparent')};
  border-left: 0;
  background: ${p => (p.$sel ? '#3399ff' : 'none')};
  color: ${p => (p.$sel ? '#fff' : '#111')};
`;
const ButtonRow = styled.div<{ $h: number; $top: number; $gap: number }>`
  display: flex;
  gap: ${p => p.$gap}px;
  height: ${p => p.$h}px;
  margin-top: ${p => p.$top}px;
`;
const Push = styled.span`flex: 1;`;

const TabColumn = styled.div`
  display: flex;
  flex: 1;
  flex-direction: column;
  min-width: 0;
  margin-right: 1px;
`;
const TabStrip = styled.div`
  display: flex;
  align-items: flex-end;
  height: 20px;
  padding-left: 1px;
`;
const Tab = styled.button<{ $w: number; $on?: boolean; $edge?: boolean }>`
  width: ${p => p.$w}px;
  height: ${p => (p.$on ? 22 : 18)}px;
  margin-bottom: ${p => (p.$on ? -1 : 0)}px;
  border: 1px solid #fff;
  border-bottom: 0;
  border-right: ${p => (p.$edge ? `1px solid ${dark}` : '0')};
  background: ${face};
  text-align: center;
`;
const TabTorn = styled.span`
  width: 8px;
  height: 18px;
`;
const TabScroll = styled.div`
  display: flex;
  align-self: flex-start;
  margin-left: auto;
`;
const TabScrollButton = styled.button`
  display: flex;
  align-items: center;
  justify-content: center;
  width: 15px;
  height: 19px;
  background: ${face};
  ${raised}
`;
const TabPanel = styled.div`
  flex: 1;
  padding: 16px 13px 0 11px;
  border: 1px solid;
  border-color: #fff ${dark} ${dark} #fff;
  box-shadow: inset -1px -1px 0 #c4c4c4;
`;
const FieldLabel = styled.label`
  display: block;
  height: 16px;
`;
const TextField = styled.input`
  display: block;
  width: 100%;
  height: 20px;
  padding-left: 1px;
  padding-bottom: 1px;
  background: #fff;
  outline: 0;
  ${sunken}
`;
const TypeList = styled.div`
  display: flex;
  height: 50px;
  margin-top: 1px;
  background: #fff;
  overflow: hidden;
  ${sunken}
`;
const TypeItems = styled.ul`flex: 1;`;
const TypeItem = styled.li<{ $sel?: boolean }>`
  height: 13px;
  padding-left: 2px;
  background: ${p => (p.$sel ? '#3399ff' : 'none')};
  color: ${p => (p.$sel ? '#fff' : '#111')};
`;
const CheckLabel = styled.label`
  display: flex;
  align-items: center;
  gap: 6px;
  margin-top: 15px;
  color: ${shade};
  text-shadow: 1px 1px 0 #fff;
`;
const CheckBox = styled.input`
  width: 12px;
  height: 12px;
  appearance: none;
  ${sunken}
`;
const CheckWrap = styled.span`
  display: grid;
  & > * { grid-area: 1 / 1; }
`;

/* ---------- bottom ---------- */

const BottomDock = styled.div`
  display: flex;
  flex: none;
  height: 137px;
  padding-top: 5px;
`;
const Pane = styled.section<{ $fill?: boolean }>`
  display: flex;
  flex: ${p => (p.$fill ? '1 1 0' : '0 0 760px')};
  min-width: 0;
  padding: ${p => (p.$fill ? '5px 1px 4px 3px' : '5px 9px 4px 3px')};
  border-top: 2px solid #6e6e6e;
  border-right: ${p => (p.$fill ? '0' : '2px solid #6e6e6e')};
  border-bottom: 1px solid ${shade};
`;
const PaneSide = styled.div`
  display: flex;
  flex-direction: column;
  align-items: center;
  gap: 1px;
  width: 12px;
`;
const PaneMain = styled.div<{ $inset: number }>`
  display: flex;
  flex: 1;
  flex-direction: column;
  min-width: 0;
  margin-left: ${p => p.$inset}px;
`;
const ActionFrame = styled.div`
  display: flex;
  height: 72px;
  padding: 3px 2px 3px 3px;
  background: #fff;
  border: 1px solid #b5b5b5;
`;
const ActionBox = styled.div`
  display: flex;
  flex: 1;
  min-width: 0;
  border: 1px solid ${dark};
  overflow: hidden;
`;
const ActionList = styled.ul`flex: 1;`;
const ClassicBar = styled.div`
  display: flex;
  flex-direction: column;
  width: 16px;
  background: #f6f6f6;
`;
const ClassicButton = styled.button<{ $h: number }>`
  display: flex;
  align-items: center;
  justify-content: center;
  height: ${p => p.$h}px;
  background: ${face};
  ${raised}
`;
const AdviceBox = styled.ul`
  flex: 1;
  border: 1px solid ${dark};
  background: #fff;
`;
const AdviceItem = styled.li`
  display: flex;
  align-items: center;
  height: 16px;
`;

const StatusBar = styled.footer`
  display: flex;
  flex: none;
  gap: 4px;
  height: 19px;
  padding: 2px 4px 0 4px;
  border-top: 1px solid #fff;
  font: 11px/14px ${uiFont};
`;
const StatusCell = styled.span<{ $w?: number }>`
  flex: ${p => (p.$w ? 'none' : '1')};
  width: ${p => (p.$w ? `${p.$w}px` : 'auto')};
  border-top: 1px solid ${shade};
  border-left: 1px solid ${shade};
  white-space: nowrap;
`;

const handles = [[0, 0], [1, 0], [2, 0], [0, 1], [2, 1], [0, 2], [1, 2], [2, 2]];
const menus = ['File', 'Edit', 'View', 'Format', 'Model', 'Tools', 'Services', 'Window', 'Help'];

const AttributesDialog = () => (
  <Dialog role="dialog" aria-label="Attributes">
    <DialogTitle>
      <DialogName>Attributes</DialogName>
      <DialogClose aria-label="Close"><Cross size={9} color="#fff" weight={1.5} /></DialogClose>
    </DialogTitle>
    <DialogBody>
      <EntityRow>
        <EntityLabel htmlFor="entity">Entity:</EntityLabel>
        <Combo id="entity" label="Entity" value="Producto" h={20} />
        <PushButton $w={20}>...</PushButton>
      </EntityRow>
      <Columns>
        <AttributeColumn>
          <AttributeHead>
            <AttributeLabel>Attribute</AttributeLabel>
            {['M8 1l7 7h-4v6h-6v-6h-4z', 'M8 15l7-7h-3v-3h-2v-3h-5v3h-1v3h-3z'].map((d, i) => (
              <MoveButton key={d} aria-label={i ? 'Move down' : 'Move up'}>
                <svg width="16" height="16" viewBox="0 0 16 16"><path d={d} fill="#c4c4c4" stroke="#a2a2a2" /></svg>
              </MoveButton>
            ))}
          </AttributeHead>
          <AttributeList role="listbox" aria-label="Attribute">
            <AttributeItem role="option" aria-selected="true">
              <KeySlot>
                <svg width="16" height="16" viewBox="0 0 16 16">
                  <path d="M8 6l7 7v2h-3l-6-6z" fill="#f5e62a" stroke="#222" />
                  <path d="M9 11.500l2-2" stroke="#222" />
                  <circle cx="6" cy="5.500" r="4.500" fill="#f5e62a" stroke="#222" />
                  <circle cx="4.500" cy="4.500" r="1.200" fill="#222" />
                </svg>
              </KeySlot>
              <AttributeText $sel>COD_Producto</AttributeText>
            </AttributeItem>
            <AttributeItem role="option" aria-selected="false">
              <KeySlot />
              <AttributeText>VCH_Nombre</AttributeText>
            </AttributeItem>
          </AttributeList>
          <ButtonRow $h={21} $top={6} $gap={6}>
            <PushButton $w={71}>New...</PushButton>
            <PushButton $w={73}>Rename...</PushButton>
            <PushButton $w={75}>Delete</PushButton>
          </ButtonRow>
        </AttributeColumn>
        <TabColumn>
          <TabStrip role="tablist">
            <Tab $w={53} role="tab">General</Tab>
            <Tab $w={63} $on $edge role="tab">Datatype</Tab>
            <Tab $w={64} $edge role="tab">Constraint</Tab>
            <Tab $w={48} role="tab">Defi...</Tab>
            <TabTorn>
              <svg width="8" height="18" viewBox="0 0 8 18"><path d="M1.500 0l2 3-2 3 4 3-4 3 2 3-2 3" fill="none" stroke={dark} /></svg>
            </TabTorn>
            <TabScroll>
              <TabScrollButton aria-label="Previous tabs"><Caret dir="left" color={shade} /></TabScrollButton>
              <TabScrollButton aria-label="Next tabs"><Caret dir="right" /></TabScrollButton>
            </TabScroll>
          </TabStrip>
          <TabPanel role="tabpanel">
            <FieldLabel htmlFor="datatype">Datatype:*</FieldLabel>
            <TextField id="datatype" defaultValue="CHAR(18)" />
            <TypeList>
              <TypeItems role="listbox" aria-label="Datatypes">
                <TypeItem $sel role="option" aria-selected="true">CHAR()</TypeItem>
                <TypeItem role="option">DATE</TypeItem>
                <TypeItem role="option">DATETIME DAY TO DAY</TypeItem>
                <TypeItem role="option">DATETIME DAY TO FRACTION</TypeItem>
              </TypeItems>
              <ScrollBar>
                <ScrollArrow aria-label="Up"><Chevron dir="up" /></ScrollArrow>
                <ScrollSpace $grow={1} />
                <ScrollArrow aria-label="Down"><Chevron dir="down" /></ScrollArrow>
              </ScrollBar>
            </TypeList>
            <CheckLabel>
              <CheckWrap>
                <CheckBox type="checkbox" defaultChecked disabled />
                <svg width="12" height="12" viewBox="0 0 12 12"><path d="M3 5.500l2 2.500 4-5" fill="none" stroke={shade} strokeWidth="2" /></svg>
              </CheckWrap>
              Not Null*
            </CheckLabel>
          </TabPanel>
        </TabColumn>
      </Columns>
      <ButtonRow $h={24} $top={14} $gap={12}>
        <PushButton $w={80}>Reset...</PushButton>
        <Push />
        <PushButton $w={75} $main>OK</PushButton>
        <PushButton $w={75}>Cancel</PushButton>
      </ButtonRow>
    </DialogBody>
  </Dialog>
);

export default function App() {
  return (
    <Shell>
      <GlobalStyle />
      <TitleBar>
        <TitleMark><AppMark /></TitleMark>
        <AppTitle>{'CA ERwin Data Modeler - [Model_2 : <Main Subject Area>*]'}</AppTitle>
        <WindowButtons>
          <CaptionButton aria-label="Minimize"><svg width="10" height="10" viewBox="0 0 10 10"><path d="M1 7h8v2h-8z" fill="#222" /></svg></CaptionButton>
          <CaptionButton aria-label="Restore">
            <svg width="11" height="11" viewBox="0 0 11 11"><path d="M1 3.500h7v6.500h-7zM2.500 1h8v8M1 3h7" fill="none" stroke="#222" strokeWidth="1.300" /></svg>
          </CaptionButton>
          <CaptionButton $close aria-label="Close"><Cross size={9} color="#fff" weight={1.5} /></CaptionButton>
        </WindowButtons>
      </TitleBar>
      <MenuBar>
        <AppMark />
        {menus.map(m => <MenuItem key={m}>{m}</MenuItem>)}
        <MdiButtons>
          <MdiButton aria-label="Minimize model"><svg width="8" height="8" viewBox="0 0 8 8"><path d="M1 5h6v2h-6z" fill="#8296ab" /></svg></MdiButton>
          <MdiButton aria-label="Restore model"><svg width="8" height="8" viewBox="0 0 8 8"><path d="M.5 3.500h5v3.500h-5zM2.500 3v-2h5v4h-2" fill="none" stroke="#8296ab" strokeWidth="1.500" /></svg></MdiButton>
          <MdiButton aria-label="Close model"><Cross color="#8296ab" /></MdiButton>
        </MdiButtons>
      </MenuBar>
      <Toolbars>
        <ToolbarRow>
          <Band>
            <Grip />
            <Tools items="new open save | print | find replace | exportLib importLib | callout *listYellow listBlue | undo redo | zoomOut zoomIn zoomOff zoomTarget zoomArea | windows > |" />
            <Combo label="Model view" value="Logical" w={109} h={24} big />
            <ComboGap />
          </Band>
          <Band $gap={1}>
            <Grip />
            <Tools items="*pointer entity subtype linkSolid linkFork linkDash" />
          </Band>
          <Band $gap={24}>
            <Grip />
            <Tools items="rect roundRect ellipse line polyline polygon textBox" />
          </Band>
        </ToolbarRow>
        <ToolbarRow>
          <Band>
            <Grip />
            <Combo label="Font" w={169} h={23} off />
            <ComboGap />
            <Combo label="Size" w={68} h={22} off />
            <Tools items="| square square square square | textColor < fillColor > lineColor <" />
          </Band>
          <Band $gap={3}>
            <Grip />
            <Tools items="alignTop alignBottom alignLeft alignRight | spreadH spreadV group ungroup" />
          </Band>
        </ToolbarRow>
        <ToolbarRow>
          <Band>
            <Grip />
            <Tools items="blockA blockB | lock | copyShapes square | mergeH refresh find2 tagShape | snake cloud | people" />
          </Band>
          <Band $gap={134}>
            <Grip />
            <Tools items="layoutX layoutTree layoutUp layoutDown columns rows growDown growUp bridge note diamond back burst" />
          </Band>
        </ToolbarRow>
      </Toolbars>
      <Workspace>
        <LeftDock>
          <DockCaption>
            <DockGrip />
            <TinyButton aria-label="Options"><Caret dir="down" color={shade} /></TinyButton>
            <TinyButton aria-label="Close"><Cross /></TinyButton>
          </DockCaption>
          <DockTools $h={29} $under={2}>
            <Tools tight items="prev next | preview trash | find findNext | book" />
          </DockTools>
          <TreeFrame>
            <TreeBox>
              {modelNodes.map(n => (
                <TreeRow key={n.text}>
                  {n.depth > 0 && <Cell />}
                  {n.depth > 1 && <Cell $line="full" />}
                  <Cell $line={n.depth ? (n.last ? 'half' : 'full') : undefined} $stub>
                    {n.box && <ExpanderMark open={n.box === 'minus'} />}
                  </Cell>
                  <TreeGlyph name={n.icon} />
                  <TreeLabel $sel={n.sel}>{n.text}</TreeLabel>
                </TreeRow>
              ))}
            </TreeBox>
          </TreeFrame>
          <DockTabs>
            <DockTab $on><TreeGlyph name="page" />Model</DockTab>
            <DockTab><TreeGlyph name="windows" />Subject Area</DockTab>
          </DockTabs>
        </LeftDock>
        <CanvasArea>
          <Sheet>
            <Canvas>
              <EntityNode>
                <EntityName>Producto</EntityName>
                <EntityBox>
                  <EntityColumn>COD_Producto</EntityColumn>
                  <EntityColumn>VCH_Nombre</EntityColumn>
                </EntityBox>
                <EntityShadow />
                {handles.map(([c, r]) => <Handle key={`${c}${r}`} $col={c} $row={r} />)}
              </EntityNode>
            </Canvas>
            <ScrollBar>
              <ScrollArrow aria-label="Scroll up"><Chevron dir="up" /></ScrollArrow>
              <ScrollSpace $grow={52} />
              <ScrollThumb />
              <ScrollSpace $grow={50} />
              <ScrollArrow aria-label="Scroll down"><Chevron dir="down" /></ScrollArrow>
            </ScrollBar>
            <ScrollBar $across>
              <ScrollArrow aria-label="Scroll left"><Chevron dir="left" /></ScrollArrow>
              <ScrollThumb />
              <ScrollSpace $grow={1} />
              <ScrollArrow aria-label="Scroll right"><Chevron dir="right" /></ScrollArrow>
            </ScrollBar>
            <SheetCorner />
          </Sheet>
          <SheetTabs>
            <SheetTab>
              <svg width="70" height="27" viewBox="0 0 70 27">
                <path d="M0 0c5 0 4 6 7 16s3 9 5 9h43c4 0 3-3 6-11s3-14 8-14z" fill="#fff" />
                <path d="M0 .5c5 0 4 6 7 16s3 9 5 9h43c4 0 3-3 6-11s3-14 8-14" fill="none" stroke="#000" strokeWidth="1.500" />
              </svg>
              <span>Display1</span>
            </SheetTab>
          </SheetTabs>
        </CanvasArea>
      </Workspace>
      <BottomDock>
        <Pane>
          <PaneSide>
            <TinyButton aria-label="Close"><Cross /></TinyButton>
            <TinyButton aria-label="Collapse"><Caret dir="left" /></TinyButton>
            <Grip $down />
          </PaneSide>
          <PaneMain $inset={3}>
            <DockTools $h={27} $under={10}>
              <Tools tight items="logsOff | find findNext | cardOff | previewOff | undoSpan redoSpan | drop | book" />
            </DockTools>
            <ActionFrame>
              <ActionBox>
                <ActionList>
                  {actions.map((a, i) => (
                    <TreeRow key={i} $bold>
                      <Cell $line="full" $stub><ExpanderMark /></Cell>
                      <TreeGlyph name="log" />
                      <TreeLabel $sel={i === 0}>{a}</TreeLabel>
                    </TreeRow>
                  ))}
                </ActionList>
                <ClassicBar>
                  <ClassicButton $h={16} aria-label="Up"><Caret dir="up" /></ClassicButton>
                  <ClassicButton $h={8} aria-label="Position" />
                  <Push />
                  <ClassicButton $h={16} aria-label="Down"><Caret dir="down" /></ClassicButton>
                </ClassicBar>
              </ActionBox>
            </ActionFrame>
            <DockTabs>
              <DockTab $on><TreeGlyph name="log" />Details</DockTab>
              <DockTab><TreeGlyph name="summary" />Summary</DockTab>
            </DockTabs>
          </PaneMain>
        </Pane>
        <Pane $fill>
          <PaneSide>
            <TinyButton aria-label="Close"><Cross /></TinyButton>
            <TinyButton aria-label="Collapse"><Caret dir="left" /></TinyButton>
            <Grip $down />
          </PaneSide>
          <PaneMain $inset={2}>
            <DockTools $h={25} $under={5}>
              <Tools tight items="save card book" />
            </DockTools>
            <AdviceBox>
              <AdviceItem>
                <TreeGlyph name="advisor" />
                <TreeLabel $sel>Attributes/Columns Editor</TreeLabel>
              </AdviceItem>
            </AdviceBox>
          </PaneMain>
        </Pane>
      </BottomDock>
      <StatusBar>
        <StatusCell>Ready</StatusCell>
        <StatusCell $w={58} />
        <StatusCell $w={18} />
        <StatusCell $w={18} />
        <StatusCell $w={104}>SQL Server 2005/20</StatusCell>
      </StatusBar>
      <AttributesDialog />
    </Shell>
  );
}
